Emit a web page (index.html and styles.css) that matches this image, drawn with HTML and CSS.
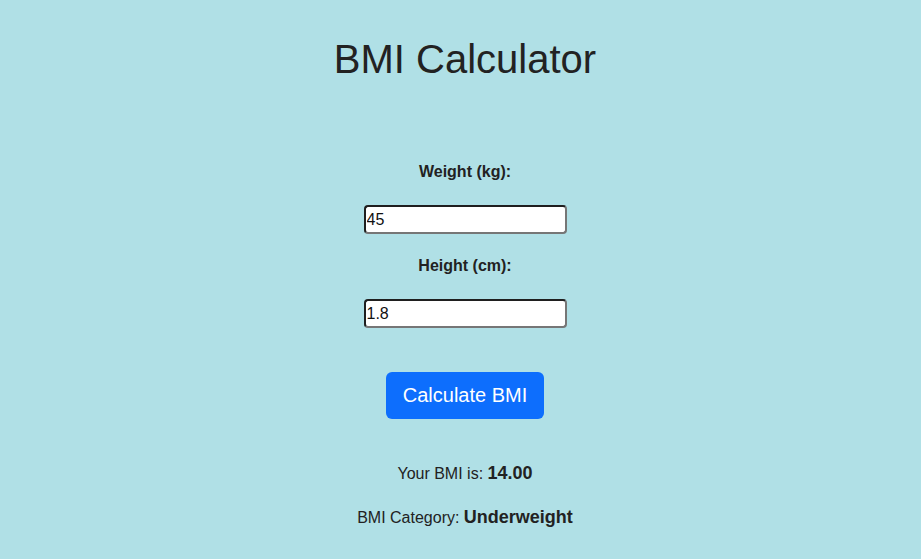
FILE: index.html
```html
<!DOCTYPE html>
<html>
<head>
<meta charset="utf-8">
<title>BMI Calculator</title>
<link rel="stylesheet" href="styles.css">
</head>
<body>
<div class="app">
  <h1 class="title">BMI Calculator</h1>
  <form class="form">
    <label class="label" for="weight">Weight (kg):</label>
    <input class="field field-first" id="weight" type="text" value="45">
    <label class="label" for="height">Height (cm):</label>
    <input class="field" id="height" type="text" value="1.8">
    <button class="btn" type="button">Calculate BMI</button>
  </form>
  <p class="result">Your BMI is: <strong>14.00</strong></p>
  <p class="result result-cat">BMI Category: <strong>Underweight</strong></p>
</div>
</body>
</html>
```
FILE: styles.css
```css
html, body {
  margin: 0;
  padding: 0;
  background: #b0e0e6;
}
body {
  font-family: "Liberation Sans", Arial, sans-serif;
  color: #222;
  padding-left: 9px;
}
.app {
  display: flex;
  flex-direction: column;
  align-items: center;
  text-align: center;
}
.title {
  margin: 36px 0 0;
  font-size: 40px;
  font-weight: normal;
  line-height: 46px;
}
.form {
  display: flex;
  flex-direction: column;
  align-items: center;
  margin-top: 81px;
}
.label {
  font-size: 16px;
  font-weight: bold;
  line-height: 18px;
}
.field {
  box-sizing: border-box;
  width: 203px;
  height: 29px;
  margin: 24px 0 23px;
  padding: 0 1px;
  border: 2px solid;
  border-color: #1f1f1f #767676 #767676 #1f1f1f;
  border-radius: 4px;
  background: #fff;
  font-family: "Liberation Sans", Arial, sans-serif;
  font-size: 16px;
  color: #111;
  outline: none;
}
.field + .label + .field {
  margin-top: 24px;
  margin-bottom: 0;
}
.btn {
  margin-top: 44px;
  box-sizing: border-box;
  width: 158px;
  height: 47px;
  padding: 0;
  border: none;
  border-radius: 6px;
  background: #0d6efd;
  color: #fff;
  font-family: "Liberation Sans", Arial, sans-serif;
  font-size: 20px;
  cursor: pointer;
}
.result {
  margin: 44px 0 0;
  font-size: 16px;
  line-height: 21px;
}
.result strong {
  font-size: 18px;
}
.result-cat {
  margin-top: 23px;
}
```
